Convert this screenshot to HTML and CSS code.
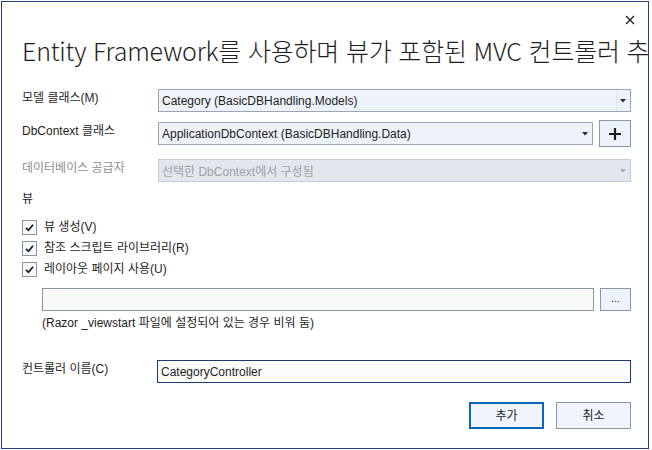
FILE: index.html
```html
<!DOCTYPE html>
<html lang="ko">
<head>
<meta charset="utf-8">
<title>Entity Framework</title>
<link rel="stylesheet" href="styles.css">
</head>
<body>
<div class="dialog">
  <div class="titlebar">
    <span class="close">
      <svg width="10" height="10" viewBox="0 0 10 10"><path d="M1 1 L9 9 M9 1 L1 9" stroke="#1a1a1a" stroke-width="1.3" fill="none"/></svg>
    </span>
  </div>
  <div class="title">Entity Framework를 사용하며 뷰가 포함된 MVC 컨트롤러 추가</div>

  <div class="form">
    <div class="row r1">
      <label class="lbl">모델 클래스(M)</label>
      <div class="combo">
        <span class="combo-text">Category (BasicDBHandling.Models)</span>
        <span class="arrow sep"><svg width="6" height="4" viewBox="0 0 6 4"><path d="M0 0 H6 L3 3.5 Z" fill="#2a2a2a"/></svg></span>
      </div>
    </div>

    <div class="row r2">
      <label class="lbl">DbContext 클래스</label>
      <div class="combo">
        <span class="combo-text">ApplicationDbContext (BasicDBHandling.Data)</span>
        <span class="arrow"><svg width="6" height="4" viewBox="0 0 6 4"><path d="M0 0 H6 L3 3.5 Z" fill="#2a2a2a"/></svg></span>
      </div>
      <button class="btn-plus"><svg width="12" height="12" viewBox="0 0 12 12"><path d="M6 0 V12 M0 6 H12" stroke="#1a1a1a" stroke-width="2.2" fill="none"/></svg></button>
    </div>

    <div class="row r3">
      <label class="lbl disabled">데이터베이스 공급자</label>
      <div class="combo combo-disabled">
        <span class="combo-text">선택한 DbContext에서 구성됨</span>
        <span class="arrow"><svg width="6" height="4" viewBox="0 0 6 4"><path d="M0 0 H6 L3 3.5 Z" fill="#a6abb3"/></svg></span>
      </div>
    </div>

    <div class="section">뷰</div>

    <div class="checks">
      <div class="check-row">
        <span class="box"><svg width="13" height="13" viewBox="0 0 13 13"><path d="M3 6.8 L5.5 9.3 L10 3.8" stroke="#1b1b1b" stroke-width="1.7" fill="none"/></svg></span>
        <span class="check-label">뷰 생성(V)</span>
      </div>
      <div class="check-row">
        <span class="box"><svg width="13" height="13" viewBox="0 0 13 13"><path d="M3 6.8 L5.5 9.3 L10 3.8" stroke="#1b1b1b" stroke-width="1.7" fill="none"/></svg></span>
        <span class="check-label">참조 스크립트 라이브러리(R)</span>
      </div>
      <div class="check-row">
        <span class="box"><svg width="13" height="13" viewBox="0 0 13 13"><path d="M3 6.8 L5.5 9.3 L10 3.8" stroke="#1b1b1b" stroke-width="1.7" fill="none"/></svg></span>
        <span class="check-label">레이아웃 페이지 사용(U)</span>
      </div>
    </div>

    <div class="layout-row">
      <div class="textbox"></div>
      <button class="btn-browse">...</button>
    </div>
    <div class="note">(Razor _viewstart 파일에 설정되어 있는 경우 비워 둠)</div>

    <div class="row r4">
      <label class="lbl">컨트롤러 이름(C)</label>
      <div class="textbox focused"><span class="combo-text">CategoryController</span></div>
    </div>

    <div class="buttons">
      <button class="btn default">추가</button>
      <button class="btn">취소</button>
    </div>
  </div>
</div>
</body>
</html>
```

FILE: styles.css
```css
* { box-sizing: border-box; }
html, body { margin: 0; padding: 0; background: #ffffff; }
body {
  font-family: "Liberation Sans", "Noto Sans CJK KR", sans-serif;
  font-size: 12px;
  color: #1e1e1e;
}
.dialog {
  margin: 1px 0 0 1px;
  width: 648px;
  height: 448px;
  border: 1px solid #26407a;
  background: #ffffff;
  overflow: hidden;
}
.titlebar {
  height: 32px;
  display: flex;
  justify-content: flex-end;
  align-items: center;
  padding: 4px 13px 0 0;
}
.close { display: flex; width: 10px; height: 10px; }
.title {
  font-family: "Noto Sans CJK KR", sans-serif;
  font-weight: 300;
  font-size: 25px;
  line-height: 32px;
  height: 32px;
  padding-left: 20px;
  white-space: nowrap;
  color: #1e1e1e;
  letter-spacing: -0.2px;
}
.form {
  padding: 0 17px 0 20px;
}
.row {
  display: flex;
  align-items: center;
}
.lbl {
  width: 136px;
  flex: none;
  line-height: 16px;
  padding-bottom: 5px;
}
.lbl.disabled { color: #8d8d8d; }
.r1 { margin-top: 23px; height: 23px; }
.r2 { margin-top: 8px; height: 27px; }
.r3 { margin-top: 12px; height: 23px; }
.r4 { margin-top: 29px; height: 23px; }
.r4 .lbl { width: 135px; }

.combo {
  flex: 1;
  height: 23px;
  display: flex;
  align-items: center;
  background: #eef2f9;
  border: 1px solid #9ba5b7;
}
.combo-text {
  flex: 1;
  padding-left: 3px;
  white-space: nowrap;
  overflow: hidden;
}
.arrow {
  width: 14px;
  height: 21px;
  display: flex;
  align-items: center;
  justify-content: center;
  padding-right: 1px;
}
.arrow.sep { border-left: 1px solid #dfe4ee; }
.combo-disabled {
  background: #e1e6ef;
  border-color: #c5cad3;
  color: #a3a3a3;
}
.btn-plus {
  flex: none;
  margin-left: 6px;
  width: 32px;
  height: 27px;
  padding: 0;
  background: #eef2fb;
  border: 1px solid #8e97a8;
  display: flex;
  align-items: center;
  justify-content: center;
}
.section {
  margin-top: 9px;
  line-height: 16px;
}
.checks {
  margin-top: 10px;
}
.check-row {
  height: 21px;
  display: flex;
  align-items: center;
}
.box {
  width: 15px;
  height: 15px;
  border: 1px solid #8f949c;
  background: #f4f7fc;
  display: flex;
  align-items: center;
  justify-content: center;
  flex: none;
}
.check-label {
  margin-left: 7px;
  line-height: 16px;
  padding-bottom: 2px;
}
.layout-row {
  margin-top: 8px;
  margin-left: 20px;
  display: flex;
  height: 23px;
}
.textbox {
  flex: 1;
  height: 23px;
  background: #fafafa;
  border: 1px solid #8c95a7;
  display: flex;
  align-items: center;
}
.btn-browse {
  flex: none;
  margin-left: 6px;
  width: 31px;
  height: 23px;
  padding: 0 0 4px 0;
  background: #eef3fb;
  border: 1px solid #8c95a7;
  font-family: "Liberation Sans", sans-serif;
  font-size: 11px;
  color: #1e1e1e;
}
.note {
  margin-left: 20px;
  margin-top: 4px;
  line-height: 16px;
}
.textbox.focused {
  border-color: #1d3a6f;
  background: #fbfbfb;
}
.buttons {
  margin-top: 19px;
  display: flex;
  justify-content: flex-end;
  gap: 12px;
}
.btn {
  width: 75px;
  height: 27px;
  padding: 0 0 2px 0;
  background: #f0f4fc;
  border: 1px solid #8d94a6;
  font-family: "Noto Sans CJK KR", sans-serif;
  font-size: 12px;
  color: #1e1e1e;
}
.btn.default {
  border: 2px solid #0a66b8;
}
```
